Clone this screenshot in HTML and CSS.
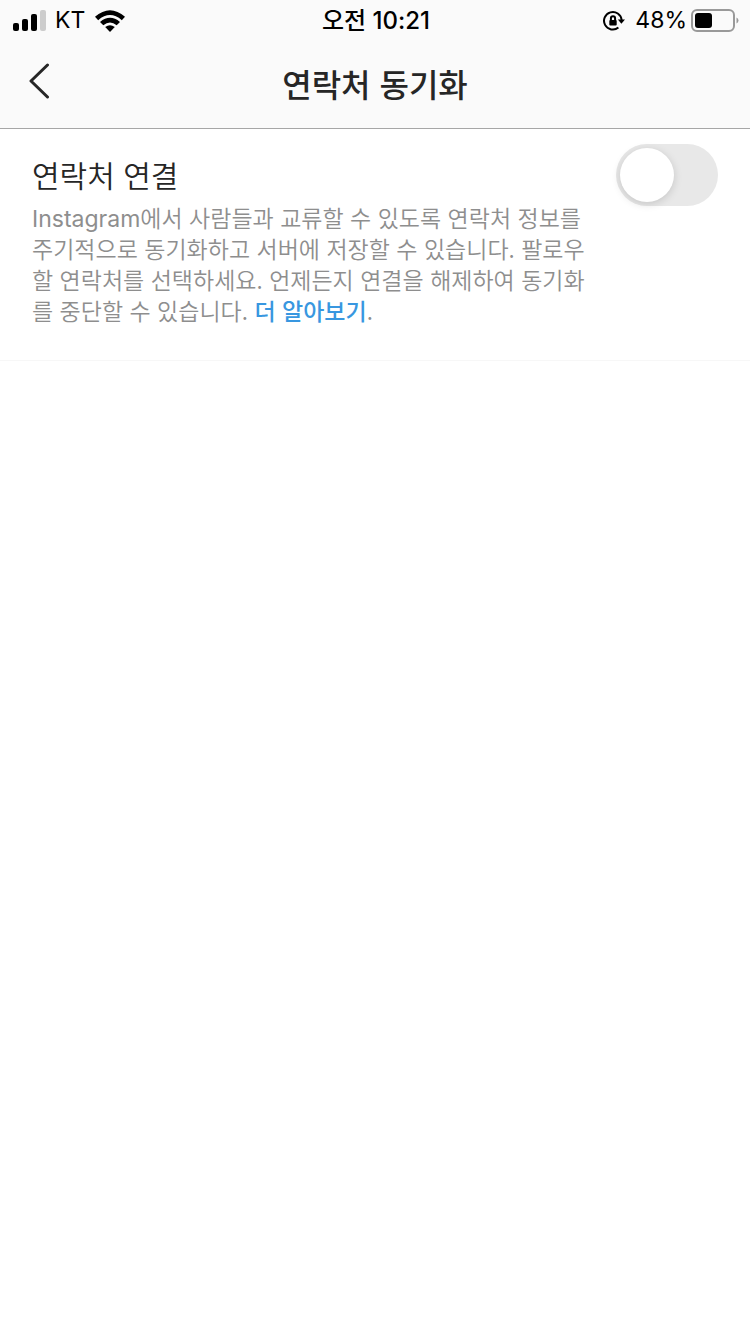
FILE: index.html
```html
<!DOCTYPE html>
<html lang="ko">
<head>
  <meta charset="UTF-8" />
  <meta name="viewport" content="width=device-width, initial-scale=1.0"/>
  <title>연락처 동기화</title>
  <link rel="stylesheet" href="styles.css">
</head>
<body>

  <header class="top">
    <div class="status-bar">
      <div class="status-left">
        <svg class="signal" width="34" height="22" viewBox="0 0 34 22" aria-hidden="true">
          <rect x="0" y="13" width="6" height="8" rx="2"/>
          <rect x="9" y="9" width="6" height="12" rx="2"/>
          <rect x="18" y="4" width="6" height="17" rx="2"/>
          <rect class="off" x="27" y="0" width="6" height="21" rx="2"/>
        </svg>
        <span class="carrier">KT</span>
        <svg class="wifi" width="30" height="22" viewBox="0 0 30 22" aria-hidden="true">
          <path d="M0 6.8 Q15 -6.4 30 6.8 L26.8 10.2 Q15 0 3.2 10.2 Z"/>
          <path d="M5 11.9 Q15 3.6 25 11.9 L21.7 15.2 Q15 9.8 8.3 15.2 Z"/>
          <path d="M10.2 17 Q15 13.6 19.8 17 L15 22 Z"/>
        </svg>
      </div>
      <div class="clock">오전 10:21</div>
      <div class="status-right">
        <svg class="rotation-lock" width="22" height="22" viewBox="0 0 22 22" aria-hidden="true">
          <path class="ring" d="M15.4 17.6 A8.8 8.8 0 1 1 18.6 10"/>
          <path d="M14.8 9.4 H22 L18.4 13.8 Z"/>
          <rect x="6.3" y="10" width="7.4" height="5.6" rx="1"/>
          <path class="shackle" d="M7.9 10.4 V8.4 A2.1 2.1 0 0 1 12.1 8.4 V10.4"/>
        </svg>
        <span class="percent">48%</span>
        <svg class="battery" width="48" height="24" viewBox="0 0 48 24" aria-hidden="true">
          <rect class="shell" x="1" y="1" width="42" height="21" rx="5"/>
          <rect x="4" y="4" width="17" height="15" rx="3"/>
          <path class="cap" d="M45.5 8.5 Q47.5 9.5 47.5 11.5 Q47.5 13.5 45.5 14.5 Z"/>
        </svg>
      </div>
    </div>

    <nav class="nav-bar">
      <button class="back" type="button" aria-label="뒤로">
        <svg width="22" height="38" viewBox="0 0 22 38" aria-hidden="true">
          <path d="M18.5 3 L2 19 L18.5 35"/>
        </svg>
      </button>
      <h1 class="title">연락처 동기화</h1>
    </nav>
  </header>

  <main class="setting">
    <div class="setting-text">
      <label class="setting-label" for="connect">연락처 연결</label>
      <p class="setting-info" id="info"><span class="latin">Instagram</span>에서 사람들과 교류할 수 있도록 연락처 정보를 주기적으로 동기화하고 서버에 저장할 수 있습니다. 팔로우할 연락처를 선택하세요. 언제든지 연결을 해제하여 동기화를 중단할 수 있습니다. <a class="more" href="#">더 알아보기</a>.</p>
    </div>
    <input class="switch" type="checkbox" role="switch" id="connect" aria-describedby="info">
  </main>

</body>
</html>
```
FILE: styles.css
```css
* {
  box-sizing: border-box;
}

body {
  margin: 0;
  background: #fff;
  color: #262626;
  font-family: "Noto Sans CJK KR", sans-serif;
}

svg {
  display: block;
}

.top {
  background: #fafafa;
  border-bottom: 1px solid #a6a6a6;
}

/* Status bar */
.status-bar {
  display: grid;
  grid-template-columns: 1fr auto 1fr;
  align-items: center;
  height: 41px;
  padding: 0 11px 0 13px;
  color: #000;
  font-family: Inter, "Noto Sans CJK KR", sans-serif;
  font-size: 23px;
  line-height: 41px;
}

.status-left,
.status-right {
  display: flex;
  align-items: center;
}

.status-left {
  gap: 8px;
}

.wifi {
  margin-left: 2px;
}

.status-right {
  justify-content: flex-end;
  gap: 4px;
}

.signal .off {
  fill: #ccc;
}

.clock {
  font-size: 24px;
  font-weight: 500;
}

.rotation-lock {
  margin-right: 6px;
}

.ring,
.shackle {
  fill: none;
  stroke: #000;
  stroke-width: 2;
}

.shell {
  fill: none;
  stroke: #999;
  stroke-width: 2;
}

.cap {
  fill: #999;
}

/* Navigation bar */
.nav-bar {
  display: grid;
  grid-template-columns: 1fr auto 1fr;
  align-items: center;
  height: 87px;
  padding-bottom: 4px;
}

.back {
  justify-self: start;
  padding: 0 29px;
  border: none;
  background: none;
  cursor: pointer;
}

.back svg {
  margin-bottom: 4px;
}

.back path {
  fill: none;
  stroke: #262626;
  stroke-width: 3;
  stroke-linecap: round;
  stroke-linejoin: round;
}

.title {
  margin: 0;
  font-size: 32px;
  font-weight: 500;
  line-height: 48px;
}

/* Setting row */
.setting {
  display: flex;
  align-items: flex-start;
  justify-content: space-between;
  gap: 24px;
  padding: 15px 32px 34px;
  border-bottom: 1px solid #f7f7f7;
}

.setting-text {
  flex: 1;
  padding-top: 6px;
}

.setting-label {
  display: block;
  font-size: 30px;
  font-weight: 350;
  line-height: 48px;
}

.setting-info {
  margin: 4px 0 0;
  color: #8e8e8e;
  font-size: 23px;
  font-weight: 350;
  line-height: 31px;
}

.latin {
  font-family: Inter, sans-serif;
  font-weight: 400;
  line-height: 1;
}

.more {
  color: #3897e0;
  font-weight: 500;
  text-decoration: none;
}

.switch {
  appearance: none;
  flex: none;
  width: 102px;
  height: 62px;
  margin: 0;
  padding: 4px;
  border-radius: 31px;
  background: #e8e8e8;
  cursor: pointer;
}

.switch::before {
  content: "";
  display: block;
  width: 54px;
  height: 54px;
  border-radius: 50%;
  background: #fff;
  box-shadow: 0 2px 8px rgba(0, 0, 0, 0.15);
}

.switch:checked {
  background: #3897e0;
}

.switch:checked::before {
  margin-left: 40px;
}
```
